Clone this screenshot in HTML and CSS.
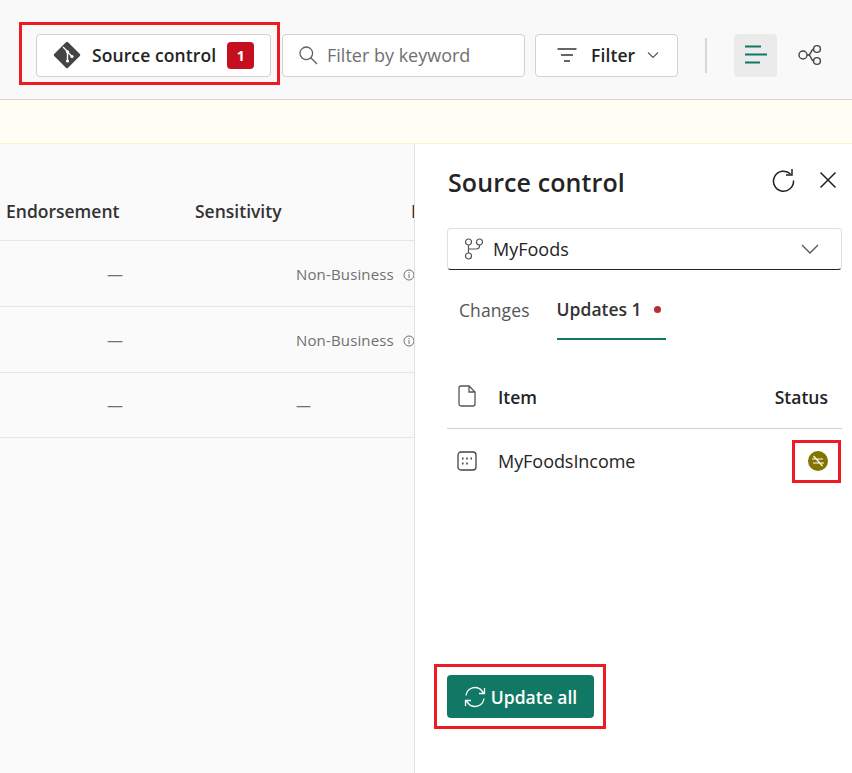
FILE: index.html
```html
<!DOCTYPE html>
<html lang="en">

<head>
    <meta charset="UTF-8">
    <meta name="viewport" content="width=device-width, initial-scale=1.0">
    <title>Source control</title>
    <link rel="stylesheet" href="styles.css">
</head>

<body>
    <!--Toolbar-->
    <header class="toolbar">
        <button class="btn btn-source">
            <svg class="git-icon" width="28" height="28" viewBox="0 0 28 28">
                <rect x="4.2" y="4.2" width="19.6" height="19.6" rx="1.5" transform="rotate(45 14 14)" fill="#444"/>
                <path d="M10 6 L14.5 10.5 V20 M14.5 11 L19 15.5" fill="none" stroke="#fff" stroke-width="1.4"/>
                <circle cx="14.5" cy="10.8" r="1.6" fill="#fff"/>
                <circle cx="14.5" cy="20" r="1.6" fill="#fff"/>
                <circle cx="19" cy="15.5" r="1.6" fill="#fff"/>
            </svg>
            <span class="btn-label">Source control</span>
            <span class="count-badge">1</span>
        </button>
        <div class="search">
            <svg width="20" height="20" viewBox="0 0 20 20" fill="none" stroke="#616161" stroke-width="1.3">
                <circle cx="8.3" cy="8.3" r="6.3"/>
                <path d="M12.8 12.8 L19 19"/>
            </svg>
            <span class="search-text">Filter by keyword</span>
        </div>
        <button class="btn btn-filter">
            <svg width="20" height="14" viewBox="0 0 20 14" fill="none" stroke="#333" stroke-width="1.4">
                <path d="M0.5 1 H19.5 M4 7 H16 M7 13 H13"/>
            </svg>
            <span class="btn-label">Filter</span>
            <svg width="12" height="8" viewBox="0 0 12 8" fill="none" stroke="#555" stroke-width="1.1">
                <path d="M1 1.5 L6 6.5 L11 1.5"/>
            </svg>
        </button>
        <div class="divider"></div>
        <button class="view-btn">
            <svg width="22" height="20" viewBox="0 0 22 20" fill="none" stroke="#117865" stroke-width="1.8">
                <path d="M0 1.5 H16 M0 9.5 H22 M0 17.5 H15"/>
            </svg>
        </button>
        <svg class="lineage" width="24" height="22" viewBox="0 0 24 22" fill="none" stroke="#444" stroke-width="1.4">
            <circle cx="5" cy="11" r="4"/>
            <circle cx="19" cy="5" r="3.4"/>
            <circle cx="19" cy="17" r="3.4"/>
            <path d="M9 11 H10.5 C13 11 13 5.5 15.6 5 M10.5 11 C13 11 13 16.5 15.6 17"/>
        </svg>
    </header>

    <div class="banner"></div>

    <main class="content">
        <!--List behind the panel-->
        <section class="list">
            <div class="list-head">
                <span class="col-a">Endorsement</span>
                <span class="col-b">Sensitivity</span>
                <span>Label</span>
            </div>
            <div class="list-row">
                <span class="col-dash">—</span>
                <span class="sens">Non-Business
                    <svg class="info" width="12" height="12" viewBox="0 0 12 12" fill="none" stroke="#707070">
                        <circle cx="6" cy="6" r="5"/>
                        <path d="M6 5 V9 M6 3 V4"/>
                    </svg>
                </span>
            </div>
            <div class="list-row">
                <span class="col-dash">—</span>
                <span class="sens">Non-Business
                    <svg class="info" width="12" height="12" viewBox="0 0 12 12" fill="none" stroke="#707070">
                        <circle cx="6" cy="6" r="5"/>
                        <path d="M6 5 V9 M6 3 V4"/>
                    </svg>
                </span>
            </div>
            <div class="list-row">
                <span class="col-dash">—</span>
                <span class="sens">—</span>
            </div>
        </section>

        <!--Source control panel-->
        <aside class="panel">
            <div class="panel-head">
                <h1>Source control</h1>
                <svg class="refresh" width="24" height="24" viewBox="0 0 24 24" fill="none" stroke="#222" stroke-width="1.5">
                    <path d="M19.5 6 A10 10 0 1 0 22.5 12.5"/>
                    <path d="M21 1 V7 H15"/>
                </svg>
                <svg class="close" width="18" height="18" viewBox="0 0 18 18" fill="none" stroke="#222" stroke-width="1.5">
                    <path d="M1.5 1.5 L16.5 16.5 M16.5 1.5 L1.5 16.5"/>
                </svg>
            </div>

            <div class="branch">
                <svg width="20" height="22" viewBox="0 0 20 22" fill="none" stroke="#555" stroke-width="1.2">
                    <circle cx="4.5" cy="4" r="3"/>
                    <circle cx="15.5" cy="4" r="3"/>
                    <circle cx="4.5" cy="18" r="3"/>
                    <path d="M4.5 7 V15 M15.5 7 V8 Q15.5 11 12 11 H4.5"/>
                </svg>
                <span class="branch-name">MyFoods</span>
                <svg class="branch-arrow" width="18" height="10" viewBox="0 0 18 10" fill="none" stroke="#555" stroke-width="1.3">
                    <path d="M1 1 L9 9 L17 1"/>
                </svg>
            </div>

            <div class="tabs">
                <span class="tab">Changes</span>
                <span class="tab tab-active">Updates 1 <i class="dot"></i></span>
            </div>

            <div class="items-head">
                <svg width="18" height="22" viewBox="0 0 18 22" fill="none" stroke="#555" stroke-width="1.3">
                    <path d="M3 1 H11 L17 7 V19 A2 2 0 0 1 15 21 H3 A2 2 0 0 1 1 19 V3 A2 2 0 0 1 3 1 Z M11 1 V7 H17"/>
                </svg>
                <span class="items-title">Item</span>
                <span class="items-status">Status</span>
            </div>

            <div class="item-row">
                <svg width="20" height="20" viewBox="0 0 20 20" fill="none" stroke="#444" stroke-width="1.3">
                    <rect x="1" y="1" width="18" height="18" rx="3"/>
                    <path d="M5 7.5 H6.5 M9.2 7.5 H10.8 M13.5 7.5 H15 M5 12.5 H6.5 M9.2 12.5 H10.8" stroke-width="2"/>
                </svg>
                <span class="item-name">MyFoodsIncome</span>
                <span class="status-icon">
                    <svg width="14" height="12" viewBox="0 0 14 12" fill="none" stroke="#fff" stroke-width="1.2">
                        <path d="M1 4 H12 M2 8 H13 M2.5 1 L11.5 11"/>
                    </svg>
                </span>
            </div>

            <button class="update-btn">
                <svg width="22" height="22" viewBox="0 0 22 22" fill="none" stroke="#fff" stroke-width="1.3">
                    <path d="M2 9.5 A9 9 0 0 1 18 5 L20 7.5 M20.5 2 V7.5 H15"/>
                    <path d="M20 12.5 A9 9 0 0 1 4 17 L2 14.5 M1.5 20 V14.5 H7"/>
                </svg>
                Update all
            </button>
        </aside>
    </main>

    <!--Red callout boxes-->
    <div class="callout callout-source"></div>
    <div class="callout callout-status"></div>
    <div class="callout callout-update"></div>
</body>

</html>
```

FILE: styles.css
```css
* {
    margin: 0;
    padding: 0;
    box-sizing: border-box;
    font-family: 'Open Sans', 'Noto Sans', sans-serif;
}

body {
    width: 852px;
    height: 773px;
    overflow: hidden;
    background: #fff;
    color: #242424;
    display: flex;
    flex-direction: column;
}

/* Toolbar */
.toolbar {
    height: 100px;
    flex: none;
    display: flex;
    align-items: center;
    padding: 11px 0 0 36px;
    background: #f9f9f9;
    border-bottom: 1px solid #d6d6d6;
}

.btn {
    height: 43px;
    display: flex;
    align-items: center;
    background: #fff;
    border: 1px solid #d1d1d1;
    border-radius: 4px;
    color: #242424;
}

.btn-label {
    font-size: 17.5px;
    font-weight: 600;
    letter-spacing: 0.1px;
}

.btn-source {
    width: 235px;
    padding-left: 16px;
}

.git-icon {
    margin-right: 11px;
}

.count-badge {
    width: 27px;
    height: 27px;
    margin-left: 11px;
    display: flex;
    align-items: center;
    justify-content: center;
    background: #c50f1f;
    border-radius: 4px;
    color: #fff;
    font-size: 14px;
    font-weight: 700;
}

.search {
    width: 243px;
    height: 43px;
    margin-left: 11px;
    display: flex;
    align-items: center;
    gap: 9px;
    padding-left: 15px;
    background: #fff;
    border: 1px solid #d1d1d1;
    border-radius: 4px;
}

.search-text {
    font-size: 18px;
    color: #707070;
}

.btn-filter {
    width: 143px;
    margin-left: 10px;
    padding-left: 21px;
}

.btn-filter .btn-label {
    margin: 0 12px 0 14px;
}

.divider {
    width: 2px;
    height: 35px;
    margin: 0 27px;
    background: #d6d6d6;
}

.view-btn {
    width: 43px;
    height: 43px;
    display: flex;
    align-items: center;
    justify-content: center;
    border: none;
    border-radius: 4px;
    background: #ebebeb;
}

.lineage {
    margin-left: 21px;
}

.banner {
    height: 44px;
    flex: none;
    background: #fffef5;
    border-bottom: 1px solid #fbf4c8;
}

/* Main area */
.content {
    flex: 1;
    display: flex;
    min-height: 0;
}

.list {
    width: 415px;
    flex: none;
    overflow: hidden;
    white-space: nowrap;
    background: #fafafa;
    border-right: 1px solid #e0e0e0;
}

.list-head {
    height: 97px;
    padding: 38px 0 0 6px;
    display: flex;
    align-items: center;
    border-bottom: 1px solid #e6e6e6;
    font-size: 17.5px;
    font-weight: 600;
    color: #333;
}

.col-a {
    width: 189px;
    flex: none;
}

.col-b {
    width: 216px;
    flex: none;
}

.list-row {
    height: 66px;
    padding-left: 107px;
    display: flex;
    align-items: center;
    border-bottom: 1px solid #e6e6e6;
    color: #707070;
}

.list-row:last-child {
    height: 65px;
}

.col-dash {
    width: 189px;
    flex: none;
    font-size: 16px;
}

.sens {
    font-size: 15px;
    letter-spacing: 0.15px;
    white-space: nowrap;
}

.info {
    margin-left: 5px;
    vertical-align: -1px;
}

/* Panel */
.panel {
    flex: 1;
    display: flex;
    flex-direction: column;
    padding: 0 10px 55px 32px;
    background: #fff;
}

.panel-head {
    height: 84px;
    flex: none;
    display: flex;
    align-items: center;
    padding: 0 5px 8px 1px;
}

h1 {
    font-size: 25px;
    font-weight: 600;
    letter-spacing: 0.1px;
    flex: 1;
}

.refresh,
.close {
    margin-bottom: 5px;
}

.close {
    margin-left: 24px;
}

.branch {
    height: 42px;
    flex: none;
    display: flex;
    align-items: center;
    gap: 9px;
    padding: 0 22px 0 16px;
    border: 1px solid #e0e0e0;
    border-bottom: 1.5px solid #242424;
    border-radius: 4px;
}

.branch-name {
    flex: 1;
    font-size: 18px;
}

.tabs {
    height: 70px;
    flex: none;
    display: flex;
    gap: 27px;
    padding-left: 12px;
}

.tab {
    display: flex;
    align-items: center;
    height: 100%;
    padding-top: 10px;
    font-size: 17.5px;
    letter-spacing: 0.1px;
    color: #555;
}

.tab-active {
    width: 109px;
    gap: 6px;
    font-weight: 600;
    letter-spacing: 0;
    color: #333;
    border-bottom: 2px solid #117865;
}

.dot {
    width: 7px;
    height: 7px;
    margin-left: 6px;
    border-radius: 50%;
    background: #b92e34;
}

.items-head {
    height: 89px;
    flex: none;
    display: flex;
    align-items: center;
    padding: 26px 14px 0 11px;
    border-bottom: 1px solid #d1d1d1;
    font-size: 17.5px;
    font-weight: 600;
}

.items-head svg {
    margin-top: -2px;
}

.items-title {
    flex: 1;
    margin-left: 22px;
}

.item-row {
    height: 65px;
    flex: none;
    display: flex;
    align-items: center;
    padding: 0 14px 2px 10px;
}

.item-name {
    flex: 1;
    margin-left: 21px;
    font-size: 18px;
    letter-spacing: -0.05px;
}

.status-icon {
    width: 20px;
    height: 20px;
    display: flex;
    align-items: center;
    justify-content: center;
    border-radius: 50%;
    background: #817400;
}

.update-btn {
    width: 147px;
    height: 43px;
    margin-top: auto;
    display: flex;
    align-items: center;
    justify-content: center;
    gap: 5px;
    border: none;
    border-radius: 4px;
    background: #117865;
    color: #fff;
    font-size: 17.5px;
    font-weight: 600;
}

/* Red boxes drawn over the screenshot */
.callout {
    position: absolute;
    border: 3px solid #ed1c24;
}

.callout-source {
    left: 19px;
    top: 22px;
    width: 261px;
    height: 63px;
}

.callout-status {
    left: 792px;
    top: 440px;
    width: 49px;
    height: 43px;
}

.callout-update {
    left: 434px;
    top: 664px;
    width: 172px;
    height: 65px;
}
```
